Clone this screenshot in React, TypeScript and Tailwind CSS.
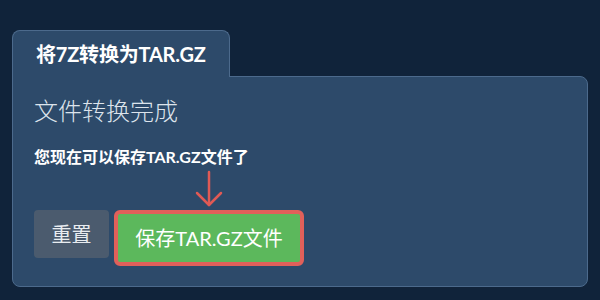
import React from "react";

export default function App() {
  const font = { fontFamily: 'Lato, "Noto Sans CJK SC", sans-serif' };
  return (
    <div className="w-[600px] h-[300px] bg-[#10233a] pt-[30px] px-[12px] overflow-hidden" style={font}>
      <div className="relative z-10 -mb-px w-[218px] h-[47px] bg-[#2d4a6a] border border-b-0 border-[#4c6a8c] rounded-t-[8px] pl-[23px] flex items-center">
        <span className="text-[20px] font-bold text-white leading-none tracking-[-0.2px]">将7Z转换为TAR.GZ</span>
      </div>
      <div className="w-[576px] bg-[#2d4a6a] border border-[#4c6a8c] rounded-b-[8px] rounded-tr-[8px] pl-[21px] pt-[18px] pb-[20px]">
        <div className="text-[24px] leading-[32px] font-light text-[#dde4ec]">文件转换完成</div>
        <div className="mt-[18px] text-[16px] leading-[24px] font-bold text-white">您现在可以保存TAR.GZ文件了</div>
        <div className="mt-[41px] flex items-start gap-[5px]">
          <button className="w-[75px] h-[48px] rounded-[4px] bg-[#4b5b6e] text-[20px] text-[#e8ecf0]">重置</button>
          <div className="relative">
            <svg className="absolute left-1/2 -translate-x-1/2 bottom-full mb-[2px]" width="30" height="38" viewBox="0 0 30 38" fill="none" stroke="#e05a55" strokeWidth="2.5" strokeLinecap="round" strokeLinejoin="round">
              <path d="M15 2 V35" />
              <path d="M3 23 L15 35 L27 23" />
            </svg>
            <button className="w-[190px] h-[56px] rounded-[6px] border-4 border-[#e0605a] bg-[#5cb85c] text-[20px] text-white">保存TAR.GZ文件</button>
          </div>
        </div>
      </div>
    </div>
  );
}
